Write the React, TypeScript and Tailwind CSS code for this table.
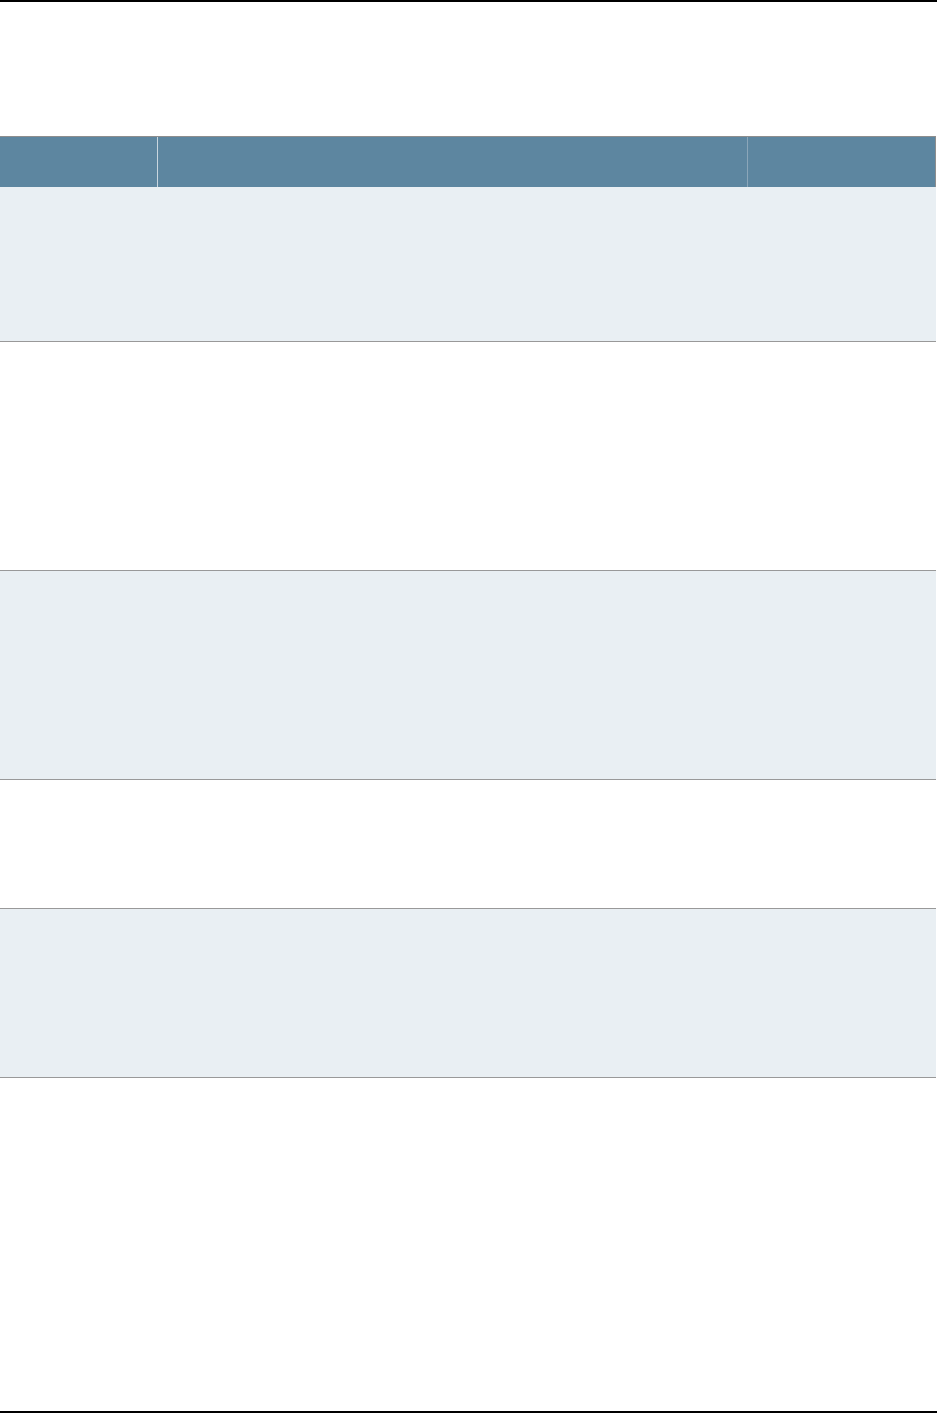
// App.tsx – empty striped table between page rules

const rows = [
  { h: "h-[155px]", shaded: true },
  { h: "h-[229px]", shaded: false },
  { h: "h-[209px]", shaded: true },
  { h: "h-[129px]", shaded: false },
  { h: "h-[169px]", shaded: true },
];

export default function App() {
  return (
    <div className="flex h-[1413px] w-[937px] flex-col bg-white font-['Liberation_Sans',sans-serif]">
      {/* top rule */}
      <div className="h-[2px] w-full bg-black" />

      {/* table */}
      <div className="mt-[134px] w-[936px]">
        {/* header */}
        <div className="flex h-[51px] border-t border-r border-[#8e8e8e] bg-[#5d86a0]">
          <div className="w-[158px] border-r border-[#c9d6df]" />
          <div className="w-[590px] border-r border-[#8ba6b9]" />
          <div className="flex-1" />
        </div>

        {/* body */}
        {rows.map((row, i) => (
          <div
            key={i}
            className={`flex ${row.h} border-b border-[#999999] ${
              row.shaded ? "bg-[#e9eff3]" : "bg-white"
            }`}
          >
            <div className="w-[158px]" />
            <div className="w-[590px]" />
            <div className="flex-1" />
          </div>
        ))}
      </div>

      {/* bottom rule */}
      <div className="mt-auto h-[2px] w-full bg-black" />
    </div>
  );
}
